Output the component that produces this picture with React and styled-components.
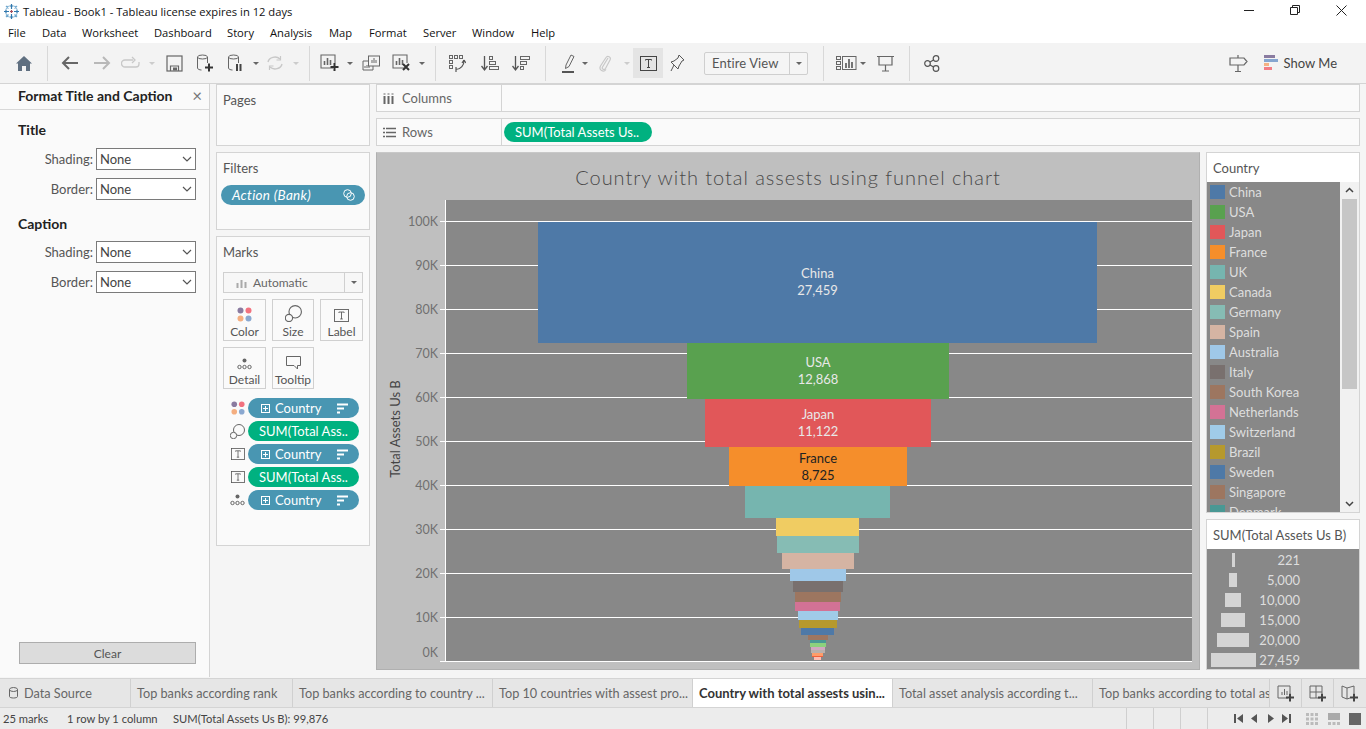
import React from "react";
import styled, { createGlobalStyle } from "styled-components";

const Global = createGlobalStyle`
  html, body { margin: 0; padding: 0; background: #fff; }
  * { box-sizing: border-box; }
  #root { width: 1366px; height: 729px; overflow: hidden; }
`;

const book = `Lato, "Open Sans", sans-serif`;
const segoe = `"Open Sans", "Noto Sans", sans-serif`;

const Shell = styled.div`
  width: 1366px; height: 729px; display: flex; flex-direction: column;
  font-family: ${book}; font-size: 12px; color: #555; overflow: hidden; background: #f5f5f5;
`;
const TitleBar = styled.div`
  height: 22px; flex: none; background: #fff; display: flex; align-items: center; padding-left: 3px;
  font-family: ${segoe}; font-size: 11.2px; color: #111; gap: 3px;
`;
const WindowButtons = styled.div`
  margin-left: auto; display: flex; align-items: center; height: 100%; margin-top: -2px; padding-right: 2px;
`;
const WindowButton = styled.div`
  width: 46px; height: 22px; display: flex; align-items: center; justify-content: center;
`;
const MenuBar = styled.div`
  height: 21px; flex: none; background: #fff; display: flex; align-items: center; padding-left: 8px;
  font-family: ${segoe}; font-size: 11.2px; color: #111;
`;
const MenuItem = styled.div`
  width: ${p => p.$w}px; white-space: nowrap;
`;
const Toolbar = styled.div`
  height: 41px; flex: none; background: #f3f3f3; border-bottom: 1px solid #d4d4d4;
  display: flex; align-items: center; padding-left: 8px;
`;
const Slot = styled.div`
  width: ${p => p.$w}px; height: 30px; flex: none; display: flex; align-items: center; justify-content: center;
  background: ${p => (p.$active ? "#e4e4e4" : "transparent")};
`;
const ToolSep = styled.div`
  width: 1px; height: 35px; background: #d8d8d8;
`;
const Caret = styled.div`
  width: 0; height: 0; border-left: 3px solid transparent; border-right: 3px solid transparent;
  border-top: 3px solid ${p => p.$c || "#666"};
`;
const FitBox = styled.div`
  width: 104px; height: 23px; flex: none; margin-left: 13px; margin-right: 5px; border: 1px solid #cfcfcf; border-radius: 2px;
  display: flex; align-items: center; font-size: 13px; letter-spacing: 0.1px; color: #555; background: #f5f5f5;
`;
const FitText = styled.div`
  flex: 1; padding-left: 7px;
`;
const FitArrow = styled.div`
  width: 18px; height: 100%; border-left: 1px solid #cfcfcf; display: flex; align-items: center; justify-content: center;
`;
const ToolRight = styled.div`
  margin-left: auto; display: flex; align-items: center; padding-right: 29px;
`;
const ShowMe = styled.div`
  display: flex; align-items: center; gap: 5px; font-size: 13px; color: #444; margin-left: 16px;
`;

const Body = styled.div`
  height: 593px; flex: none; display: flex;
`;
const FormatPanel = styled.div`
  width: 210px; flex: none; background: #fafafa; border-right: 1px solid #d4d4d4; display: flex; flex-direction: column;
`;
const FormatHead = styled.div`
  height: 26px; flex: none; border-bottom: 1px solid #d8d8d8; display: flex; align-items: center; justify-content: space-between;
  padding: 0 7px 2px 18px; font-weight: 700; font-size: 14px; color: #222;
`;
const CloseMark = styled.div`
  font-size: 17px; color: #777; font-weight: 400; line-height: 1;
`;
const SectionTitle = styled.div`
  font-weight: 700; font-size: 14px; color: #222; padding-left: 18px; height: 16px; line-height: 16px;
  margin-top: ${p => p.$top}px; margin-bottom: ${p => p.$bottom}px;
`;
const FormRow = styled.div`
  display: flex; align-items: center; height: 22px; margin-bottom: 8px;
`;
const FormLabel = styled.div`
  width: 93px; text-align: right; padding-right: 0; font-size: 13px; color: #555;
`;
const FakeSelect = styled.div`
  width: 100px; height: 22px; margin-left: 3px; border: 1px solid #7a7a7a; background: #fff; display: flex; align-items: center;
  justify-content: space-between; padding: 0 3px 0 3px; font-size: 13px; color: #444;
`;
const ClearButton = styled.div`
  margin: auto 13px 13px 19px; height: 22px; width: 177px; background: #dcdcdc; border: 1px solid #adadad;
  display: flex; align-items: center; justify-content: center; font-size: 12px; color: #555;
`;

const SideCol = styled.div`
  width: 154px; flex: none; margin-left: 6px; display: flex; flex-direction: column; gap: 6px;
`;
const Card = styled.div`
  background: #fafafa; border: 1px solid #d4d4d4; height: ${p => p.$h}px; flex: none;
`;
const CardTitle = styled.div`
  font-size: 13px; color: #555; height: 16px; line-height: 16px; margin: 7px 0 0 6px;
`;
const ActionPill = styled.div`
  margin: 9px 4px 0 4px; height: 20px; border-radius: 10px; background: #4996b2; color: #fff; font-style: italic;
  font-size: 13.5px; letter-spacing: 0.3px; display: flex; align-items: center; justify-content: space-between; padding: 0 10px 0 11px;
`;
const MarkSelect = styled.div`
  margin: 12px 6px 0 6px; height: 21px; border: 1px solid #d0d0d0; display: flex; align-items: center; background: #f7f7f7;
  font-size: 12px; color: #666;
`;
const MarkSelectText = styled.div`
  flex: 1; display: flex; align-items: center; gap: 6px; padding-left: 12px;
`;
const MarkSelectArrow = styled.div`
  width: 18px; height: 100%; border-left: 1px solid #d0d0d0; display: flex; align-items: center; justify-content: center;
`;
const MarkGrid = styled.div`
  display: grid; grid-template-columns: 43px 42px 43px; column-gap: 6px; row-gap: 6px; margin: 6px 6px 0 6px;
`;
const MarkButton = styled.div`
  height: 42px; border: 1px solid #d0d0d0; background: #fafafa; display: flex; flex-direction: column; align-items: center;
  justify-content: flex-end; padding-bottom: 1px; gap: 2px; font-size: 12px; color: #555;
`;
const PillList = styled.div`
  margin: 9px 0 0 0; display: flex; flex-direction: column; gap: 3px;
`;
const PillRow = styled.div`
  display: flex; align-items: center; height: 20px; padding-left: 10px;
`;
const PillIcon = styled.div`
  width: 21px; flex: none; display: flex; align-items: center; justify-content: center;
`;
const Pill = styled.div`
  width: 111px; height: 20px; border-radius: 10px; flex: none; margin-left: 0; color: #fff; font-size: 13px; white-space: nowrap;
  background: ${p => (p.$kind === "measure" ? "#00b180" : "#4996b2")};
  display: flex; align-items: center; padding-left: ${p => (p.$kind === "measure" ? 11 : 13)}px; gap: 5px;
`;
const PillEnd = styled.div`
  margin-left: auto; margin-right: 11px; display: flex;
`;

const Main = styled.div`
  width: 984px; flex: none; margin-left: 6px; display: flex; flex-direction: column;
`;
const Shelf = styled.div`
  height: 28px; flex: none; background: #fafafa; border: 1px solid #d4d4d4; display: flex; margin-bottom: ${p => p.$mb}px;
`;
const ShelfLabel = styled.div`
  width: 125px; flex: none; border-right: 1px solid #d4d4d4; display: flex; align-items: center; gap: 6px; padding-left: 6px;
  font-size: 13px; color: #666;
`;
const ShelfIcon = styled.div`
  width: 13px; flex: none; display: flex;
`;
const ShelfBody = styled.div`
  flex: 1; display: flex; align-items: center; padding-left: 2px;
`;
const ShelfPill = styled.div`
  width: 148px; height: 20px; border-radius: 10px; background: #00b180; color: #fff; font-size: 13px; padding-left: 11px;
  display: flex; align-items: center; white-space: nowrap;
`;
const VizRow = styled.div`
  display: flex; gap: 6px; margin-top: 6px; height: 518px;
`;
const ChartPanel = styled.div`
  width: 824px; flex: none; height: 518px; background: #bfbfbf; border: 1px solid #b0b0b0; border-top-color: #c8c8c8;
  display: flex; flex-direction: column;
`;
const ChartTitle = styled.div`
  height: 47px; flex: none; display: flex; align-items: center; justify-content: center; font-size: 20px; color: #4a4a4a;
  font-weight: 300; letter-spacing: 0.94px; padding-top: 1px; font-family: Lato, sans-serif;
`;
const ChartSvg = styled.svg`
  display: block; margin-left: -1px; font-family: ${book};
`;
const LegendCol = styled.div`
  width: 154px; flex: none; display: flex; flex-direction: column; gap: 6px;
`;
const LegendCard = styled.div`
  background: #fff; border: 1px solid #d4d4d4; height: ${p => p.$h}px; flex: none; display: flex; flex-direction: column; overflow: hidden;
`;
const LegendHead = styled.div`
  height: 29px; flex: none; display: flex; align-items: center; padding-left: 6px; font-size: 13px; color: #555;
`;
const LegendBody = styled.div`
  flex: 1; display: flex; min-height: 0; overflow: hidden;
`;
const LegendList = styled.div`
  width: 133px; flex: none; background: #888; padding-top: 0; overflow: hidden; display: flex; flex-direction: column;
`;
const LegendRow = styled.div`
  height: 20px; flex: none; display: flex; align-items: center; padding-left: 3px; color: #dedede; font-size: 13px; gap: 4px;
`;
const Swatch = styled.div`
  width: 15px; height: 14px; flex: none; background: ${p => p.$c};
`;
const Scrollbar = styled.div`
  flex: 1; background: #f1f1f1; display: flex; flex-direction: column; align-items: center; justify-content: space-between; padding: 0 2px;
`;
const ScrollThumb = styled.div`
  width: 15px; height: 195px; background: #c6c6c6; margin-bottom: 106px;
`;
const ScrollArrow = styled.div`
  height: 17px; display: flex; align-items: center; justify-content: center; width: 100%;
`;
const SizeList = styled.div`
  flex: 1; background: #888; display: flex; flex-direction: column; padding-top: 1px;
`;
const SizeRow = styled.div`
  height: 20px; flex: none; display: flex; align-items: center; color: #dedede; font-size: 13px;
`;
const SizeCell = styled.div`
  width: 52px; flex: none; display: flex; justify-content: center; padding-left: 0;
`;
const SizeBar = styled.div`
  height: 14px; background: #d4d4d4;
`;
const SizeValue = styled.div`
  width: 41px; text-align: right;
`;

const Tabs = styled.div`
  height: 30px; flex: none; background: #e6e6e6; border-top: 1px solid #d4d4d4; display: flex; margin-top: 1px;
  border-bottom: 1px solid #d4d4d4;
`;
const Tab = styled.div`
  width: ${p => p.$w}px; flex: none; border-right: 1px solid #d0d0d0; display: flex; align-items: center; gap: 6px; padding-left: ${p => p.$pl}px;
  white-space: nowrap; overflow: hidden; font-size: ${p => (p.$active ? 13 : 12.7)}px; color: ${p => (p.$active ? "#333" : "#666")};
  font-weight: ${p => (p.$active ? 700 : 400)}; background: ${p => (p.$active ? "#fff" : "transparent")};
`;
const TabAdd = styled.div`
  width: 32px; flex: none; border-right: 1px solid #d0d0d0; display: flex; align-items: center; justify-content: center;
  &:last-child { border-right: none; }
`;
const StatusBar = styled.div`
  height: 22px; flex: none; background: #ececec; border-bottom: 1px solid #a8a8a8; display: flex; align-items: center; font-size: 11.2px; color: #444;
`;
const StatusText = styled.div`
  width: ${p => p.$w}px; flex: none; padding-left: ${p => p.$pl || 0}px; white-space: nowrap;
`;
const StatusCell = styled.div`
  width: 27px; height: 100%; flex: none; border-left: 1px solid #cfcfcf;
`;
const StatusNav = styled.div`
  flex: 1; height: 100%; border-left: 1px solid #cfcfcf; display: flex; align-items: center; padding-left: 22px;
`;
const NavButton = styled.div`
  width: 16px; flex: none; display: flex; justify-content: center; align-items: center;
`;
const ViewButton = styled.div`
  width: 12px; flex: none; margin-left: ${p => p.$ml}px; display: flex;
`;

/* icons */
const I = ({ w = 18, h = 18, vb, children }) => (
  <svg width={w} height={h} viewBox={vb || `0 0 ${w} ${h}`} fill="none">{children}</svg>
);
const Logo = () => (
  <I w={17} h={17}>
    <g stroke="#2f77ad" strokeWidth="1.2">
      <path d="M8.500 1v5M6.500 3h4M8.500 11v5M6.500 14h4M1 8.500h5M3 6.500v4M11 8.500h5M14 6.500v4" />
      <path d="M3 3l2.500 2.500M5.500 3 3 5.500M11.500 3 14 5.500M14 3l-2.500 2.500M3 11.500 5.500 14M5.500 11.500 3 14M11.500 11.500 14 14M14 11.500 11.500 14" stroke="#6fa8cf" />
      <path d="M7 8.500h3M8.500 7v3" stroke="#a94f5c" />
    </g>
  </I>
);
const Home = () => <I w={18} h={18}><path d="M1 9.500 9 2l8 7.500h-2V17h-4v-5H7v5H3V9.500z" fill="#5f6f80" /></I>;
const Arrow = ({ c, flip }) => (
  <I w={18} h={16}>
    <path d={flip ? "M1 8h15M10 2l6 6-6 6" : "M17 8H2M8 2 2 8l6 6"} stroke={c} strokeWidth="2" />
  </I>
);
const Redo = () => (
  <I w={20} h={14}>
    <path d="M12 4H4a3 3 0 0 0 0 7h11a3 3 0 0 0 3-3V6" stroke="#c8c8c8" strokeWidth="1.3" />
    <path d="M11 1l3 3-3 3" stroke="#c8c8c8" strokeWidth="1.3" />
  </I>
);
const Save = () => (
  <I w={17} h={17}>
    <rect x="1" y="1" width="15" height="15" stroke="#666" strokeWidth="1.2" />
    <path d="M4.500 16v-5h8v5" stroke="#666" strokeWidth="1.2" />
    <rect x="7" y="12.500" width="4" height="3" fill="#666" />
  </I>
);
const Cyl = ({ mark }) => (
  <I w={18} h={18}>
    <ellipse cx="6.500" cy="3" rx="5" ry="2" stroke="#666" />
    <path d="M1.500 3v11c0 1.200 2 2 4 2M11.500 3v6" stroke="#666" />
    {mark === "plus" && <path d="M13 9.500v8M9 13.500h8" stroke="#333" strokeWidth="2" />}
    {mark === "pause" && <path d="M10 10v7M13.500 10v7" stroke="#444" strokeWidth="2" />}
  </I>
);
const Refresh = () => (
  <I w={18} h={16}>
    <path d="M2 7a7 6 0 0 1 12-3M16 9a7 6 0 0 1-12 3" stroke="#c8c8c8" strokeWidth="1.4" />
    <path d="M14.500 1v4h-4M3.500 15v-4h4" stroke="#c8c8c8" strokeWidth="1.2" />
  </I>
);
const Sheet = ({ mark }) => (
  <I w={20} h={18}>
    <path d="M13 14H1V1h14v8" stroke="#666" strokeWidth="1.1" />
    <path d="M4.500 11V7M7.500 11V4M10.500 11V6" stroke="#666" strokeWidth="1.6" />
    {mark === "plus" && <path d="M14.500 9v8M10.500 13h8" stroke="#333" strokeWidth="2" />}
    {mark === "x" && <path d="M11 10l6 6M17 10l-6 6" stroke="#333" strokeWidth="2" />}
  </I>
);
const Dup = () => (
  <I w={18} h={17}>
    <rect x="6.500" y="1" width="11" height="10" fill="#f3f3f3" stroke="#666" />
    <path d="M10 8V5M12 8V3M14 8V5" stroke="#666" />
    <path d="M6 6H1v9h10v-4" stroke="#666" />
    <path d="M3 13v-2M5 13v-3M7 13v-2" stroke="#666" />
  </I>
);
const Swap = () => (
  <I w={18} h={18}>
    <g stroke="#666">
      <rect x="1.500" y="1.500" width="3" height="3" /><rect x="6.500" y="1.500" width="3" height="3" /><rect x="11.500" y="1.500" width="3" height="3" />
      <rect x="1.500" y="6.500" width="3" height="3" /><rect x="1.500" y="11.500" width="3" height="3" />
    </g>
    <path d="M16 7c0 4-3 8-8 8.500M8 13v5M16 6l-2 3M16 6l2 3" stroke="#555" strokeWidth="1.2" />
  </I>
);
const Sort = ({ desc }) => (
  <I w={18} h={17}>
    <path d="M3.500 1v14M0.500 11l3 4 3-4" stroke="#555" strokeWidth="1.3" />
    {desc ? (
      <g stroke="#666"><rect x="8.500" y="1.500" width="9" height="3" /><rect x="8.500" y="6.500" width="6" height="3" /><rect x="8.500" y="11.500" width="3" height="3" /></g>
    ) : (
      <g stroke="#666"><rect x="8.500" y="1.500" width="3" height="3" /><rect x="8.500" y="6.500" width="6" height="3" /><rect x="8.500" y="11.500" width="9" height="3" /></g>
    )}
  </I>
);
const Highlight = () => (
  <I w={14} h={20}>
    <path d="M5 12 10 2l3 1.500-5 10-3.500 2z" stroke="#666" />
    <rect x="1" y="18" width="12" height="2" fill="#555" />
  </I>
);
const Clip = () => (
  <I w={14} h={18}>
    <path d="M10 4 4.500 13c-1 2 1.500 3.500 3 1.500L12 6c1.500-3-2.500-5-4-2.500L2.500 12c-2 4 3 7 5.500 3.500" stroke="#c8c8c8" strokeWidth="1.2" />
  </I>
);
const TBox = ({ s = 17, c = "#444" }) => (
  <I w={s} h={s - 2} vb="0 0 17 15">
    <rect x="0.500" y="0.500" width="16" height="14" stroke={c} />
    <path d="M5.500 4.500v-1h6v1M8.500 3.500v8M7 11.500h3" stroke={c} />
  </I>
);
const Pin = () => (
  <I w={15} h={18}>
    <path d="M9 1l5 5-2 1-3 5-1 3-7-7 3-1 4-3z M4 11l-3 6" stroke="#555" />
  </I>
);
const BarsShow = () => (
  <I w={21} h={14}>
    <g stroke="#666"><rect x="0.500" y="0.500" width="4" height="3" /><rect x="0.500" y="5.500" width="4" height="3" /><rect x="0.500" y="10.500" width="4" height="3" /></g>
    <rect x="6.500" y="0.500" width="13.500" height="13" stroke="#666" />
    <path d="M10 12V7M13 12V3M16 12V6" stroke="#555" strokeWidth="1.6" />
  </I>
);
const Present = () => (
  <I w={17} h={17}>
    <path d="M0 1.500h17M2 1.500V10h13V1.500M8.500 10v6M5 16h7" stroke="#666" strokeWidth="1.2" />
  </I>
);
const Share = () => (
  <I w={16} h={17}>
    <g stroke="#555" strokeWidth="1.2"><circle cx="3.500" cy="8.500" r="2.800" /><circle cx="12" cy="3.500" r="2.800" /><circle cx="12" cy="13.500" r="2.800" /><path d="M6 7l3.500-2M6 10l3.500 2" /></g>
  </I>
);
const Sign = () => (
  <I w={19} h={19}>
    <path d="M9 1v3M9 11v6M6 17.500h6" stroke="#666" strokeWidth="1.2" />
    <path d="M1 4h14l3 3.500-3 3.500H1z" stroke="#666" strokeWidth="1.2" />
  </I>
);
const ShowBars = () => (
  <I w={15} h={16}>
    <rect y="0" width="11" height="3" fill="#8a7ba0" /><rect y="4" width="14" height="3" fill="#86a6d0" />
    <rect y="8" width="5" height="3" fill="#f4b183" /><rect y="12" width="8" height="3" fill="#f27d85" />
  </I>
);
const Dots = ({ big }) => (
  <I w={big ? 15 : 14} h={big ? 15 : 14} vb="0 0 15 15">
    <circle cx="3.500" cy="3.500" r="3" fill="#8a7ba0" /><circle cx="11.500" cy="3.500" r="3" fill="#f2727f" />
    <circle cx="3.500" cy="11.500" r="3" fill="#f4ae80" /><circle cx="11.500" cy="11.500" r="3" fill="#8aa8d0" />
  </I>
);
const SizeIcon = ({ s = 15 }) => (
  <I w={s} h={s} vb="0 0 15 15">
    <circle cx="9" cy="6" r="5.500" stroke="#666" />
    <circle cx="3.500" cy="11.500" r="3.200" stroke="#666" fill="#fafafa" />
  </I>
);
const DetailIcon = () => (
  <I w={15} h={12}>
    <circle cx="7.500" cy="2.500" r="2" fill="#666" />
    <g stroke="#666"><circle cx="2.500" cy="9" r="1.700" /><circle cx="7.500" cy="9" r="1.700" /><circle cx="12.500" cy="9" r="1.700" /></g>
  </I>
);
const TooltipIcon = () => (
  <I w={15} h={14}>
    <path d="M.5.500h14v9h-3v3.500l-3.500-3.500H.5z" stroke="#666" />
  </I>
);
const PlusBox = () => (
  <I w={9} h={9}><rect x=".5" y=".5" width="8" height="8" stroke="#fff" /><path d="M4.500 2v5M2 4.500h5" stroke="#fff" /></I>
);
const SortLines = () => (
  <I w={11} h={11}><path d="M0 1.500h11M0 5.500h7M0 9.500h3" stroke="#fff" strokeWidth="2" /></I>
);
const Linked = () => (
  <I w={12} h={12}><g stroke="#fff"><circle cx="4.500" cy="4.500" r="3.800" /><circle cx="7.500" cy="7.500" r="3.800" /></g></I>
);
const Chevron = () => (
  <I w={10} h={6}><path d="M1 1l4 4 4-4" stroke="#555" strokeWidth="1.200" /></I>
);
const ColumnsIcon = () => (
  <I w={11} h={11}><path d="M1.500 3v8M5.500 3v8M9.500 3v8" stroke="#666" strokeWidth="2" /><path d="M0.500 1h2M4.500 1h2M8.500 1h2" stroke="#666" /></I>
);
const RowsIcon = () => (
  <I w={13} h={11}><path d="M3 1.500h10M3 5.500h10M3 9.500h10" stroke="#666" strokeWidth="1.600" /><path d="M0 1.500h2M0 5.500h2M0 9.500h2" stroke="#666" strokeWidth="1.600" /></I>
);
const AddSheet = ({ kind }) => (
  <I w={18} h={17}>
    {kind === "sheet" && <><path d="M11 13H1V1h12v7" stroke="#666" /><path d="M5 10V7M7.500 10V4M10 10V6" stroke="#666" /></>}
    {kind === "dash" && <path d="M11 13H1V1h12v7M7 1v12M1 7h12" stroke="#666" />}
    {kind === "story" && <path d="M6 3 1 1v11l5 2 3-1M6 3l7-2v7M6 3v11" stroke="#666" />}
    <path d="M13 8.500v8M9 12.500h8" stroke="#444" strokeWidth="2" />
  </I>
);
const Nav = ({ d, bar }) => (
  <I w={9} h={9}>
    <path d={d} fill="#555" />
    {bar !== undefined && <rect x={bar} y="0" width="2" height="9" fill="#555" />}
  </I>
);

const tools = [
  [32, <Home />], [14, <ToolSep />], [32, <Arrow c="#666" />], [32, <Arrow c="#b8b8b8" flip />], [26, <Redo />], [16, <Caret $c="#ccc" />],
  [28, <Save />], [34, <Cyl mark="plus" />], [28, <Cyl mark="pause" />], [12, <Caret />], [26, <Refresh />], [16, <Caret $c="#ccc" />],
  [10, <ToolSep />], [32, <Sheet mark="plus" />], [8, <Caret />], [34, <Dup />], [28, <Sheet mark="x" />], [12, <Caret />],
  [14, <ToolSep />], [30, <Swap />], [36, <Sort />], [26, <Sort desc />], [22, <ToolSep />], [24, <Highlight />], [10, <Caret />],
  [30, <Clip />], [13, <Caret $c="#ccc" />], [30, <TBox />, true], [28, <Pin />],
];
const tools2 = [
  [20, <ToolSep />], [26, <BarsShow />], [8, <Caret />], [36, <Present />], [12, <ToolSep />], [34, <Share />],
];

const menu = [["File", 34], ["Data", 40], ["Worksheet", 72], ["Dashboard", 73], ["Story", 43], ["Analysis", 59], ["Map", 40], ["Format", 54], ["Server", 49], ["Window", 59], ["Help", 40]];

const country = [
  ["China", "#4e79a7", 538, 1097, 222, 343, "27,459", -1],
  ["USA", "#59a14f", 687, 949, 343, 399, "12,868", 0],
  ["Japan", "#e15759", 705, 931, 399, 447, "11,122", 0],
  ["France", "#f58e2b", 729, 907, 447, 486, "8,725", 0],
  ["UK", "#76b5af", 745, 890, 486, 518],
  ["Canada", "#f0cc62", 776, 859, 518, 536],
  ["Germany", "#86bcb4", 777, 859, 536, 553],
  ["Spain", "#d5b4a3", 782, 854, 553, 569],
  ["Australia", "#9fc8e8", 790, 846, 569, 581],
  ["Italy", "#79706e", 793, 843, 581, 592],
  ["South Korea", "#9d7660", 795, 841, 592, 602],
  ["Netherlands", "#d37295", 795, 840, 602, 611],
  ["Switzerland", "#a0cbe8", 798, 838, 611, 620],
  ["Brazil", "#b6992d", 799, 837, 620, 628],
  ["Sweden", "#4e79a7", 801, 834, 628, 635],
  ["Singapore", "#9d7660", 808, 828, 635, 640],
  ["Denmark", "#499894", 810, 826, 640, 643],
];
const tinyBars = [
  ["#8cd17d", 810, 826, 643, 647],
  ["#d0a8c0", 811, 825, 647, 650],
  ["#bab0ac", 811, 825, 650, 653],
  ["#ff9d6a", 812, 823, 653, 656],
  ["#f1603c", 812, 823, 656, 657],
  ["#ffbcb0", 814, 821, 657, 660],
];
const ticks = [[100, 221], [90, 265], [80, 309], [70, 353], [60, 397], [50, 441], [40, 485], [30, 529], [20, 573], [10, 617]];
const sizes = [[3, "221"], [8, "5,000"], [16, "10,000"], [24, "15,000"], [32, "20,000"], [45, "27,459"]];
const marks = [
  ["Color", <Dots big />], ["Size", <SizeIcon s={17} />], ["Label", <TBox s={15} c="#555" />], ["Detail", <DetailIcon />], ["Tooltip", <TooltipIcon />],
];
const pills = [
  [<Dots />, "Country", "dim"], [<SizeIcon />, "SUM(Total Ass..", "measure"], [<TBox s={14} c="#555" />, "Country", "dim"],
  [<TBox s={14} c="#555" />, "SUM(Total Ass..", "measure"], [<DetailIcon />, "Country", "dim"],
];
const tabs = [
  ["Data Source", 131, false, 9], ["Top banks according rank", 162, false, 6], ["Top banks according to country ...", 200, false, 6],
  ["Top 10 countries with assest pro...", 200, false, 6], ["Country with total assests usin...", 200, true, 6], ["Total asset analysis according t...", 200, false, 6], ["Top banks according to total assets", 177, false, 6],
];

function Chart() {
  return (
    <ChartSvg width={824} height={469} viewBox="376 200 824 469">
      <rect x="446" y="200" width="746" height="461" fill="#888" />
      {ticks.map(([v, y]) => (
        <g key={v}>
          <rect x="440" y={y} width="752" height="1" fill="#fff" />
          <text x="438" y={y + 5} textAnchor="end" fontSize="12.500" fill="#707070">{v}K</text>
        </g>
      ))}
      <rect x="445" y="200" width="1" height="461" fill="#fff" />
      <rect x="440" y="661" width="752" height="1" fill="#fff" />
      <text x="438" y="657" textAnchor="end" fontSize="12.500" fill="#707070">0K</text>
      <text transform="translate(400 429) rotate(-90)" textAnchor="middle" fontSize="13" fill="#444">Total Assets Us B</text>
      {country.map(([n, c, x1, x2, y1, y2]) => (
        <rect key={n} x={x1} y={y1} width={x2 - x1} height={y2 - y1} fill={c} />
      ))}
      {tinyBars.map(([c, x1, x2, y1, y2]) => (
        <rect key={y1} x={x1} y={y1} width={x2 - x1} height={y2 - y1} fill={c} />
      ))}
      {country.filter(r => r[6]).map(([n, , x1, x2, y1, y2, v, dy]) => {
        const cy = (y1 + y2) / 2 + dy;
        const color = n === "France" ? "#222" : "#e8e8e8";
        return (
          <g key={n} textAnchor="middle" fontSize="13" fill={color}>
            <text x={(x1 + x2) / 2} y={cy - 4}>{n}</text>
            <text x={(x1 + x2) / 2} y={cy + 13}>{v}</text>
          </g>
        );
      })}
    </ChartSvg>
  );
}

export default function App() {
  return (
    <Shell>
      <Global />
      <TitleBar>
        <Logo />
        Tableau - Book1 - Tableau license expires in 12 days
        <WindowButtons>
          <WindowButton><I w={10} h={10}><path d="M0 5.500h10" stroke="#222" /></I></WindowButton>
          <WindowButton><I w={10} h={10}><path d="M2.500 2.500V.5h7v7h-2M.5 2.500h7v7h-7z" stroke="#222" /></I></WindowButton>
          <WindowButton><I w={11} h={11}><path d="M.5.5l10 10M10.500.5l-10 10" stroke="#222" /></I></WindowButton>
        </WindowButtons>
      </TitleBar>
      <MenuBar>
        {menu.map(([m, w]) => <MenuItem key={m} $w={w}>{m}</MenuItem>)}
      </MenuBar>
      <Toolbar>
        {tools.map(([w, icon, active], i) => <Slot key={i} $w={w} $active={active}>{icon}</Slot>)}
        <FitBox>
          <FitText>Entire View</FitText>
          <FitArrow><Caret /></FitArrow>
        </FitBox>
        {tools2.map(([w, icon], i) => <Slot key={i} $w={w}>{icon}</Slot>)}
        <ToolRight>
          <Sign />
          <ShowMe><ShowBars />Show Me</ShowMe>
        </ToolRight>
      </Toolbar>
      <Body>
        <FormatPanel>
          <FormatHead>Format Title and Caption<CloseMark>×</CloseMark></FormatHead>
          <SectionTitle $top={12} $bottom={10}>Title</SectionTitle>
          <FormRow><FormLabel>Shading:</FormLabel><FakeSelect>None<Chevron /></FakeSelect></FormRow>
          <FormRow><FormLabel>Border:</FormLabel><FakeSelect>None<Chevron /></FakeSelect></FormRow>
          <SectionTitle $top={8} $bottom={9}>Caption</SectionTitle>
          <FormRow><FormLabel>Shading:</FormLabel><FakeSelect>None<Chevron /></FakeSelect></FormRow>
          <FormRow><FormLabel>Border:</FormLabel><FakeSelect>None<Chevron /></FakeSelect></FormRow>
          <ClearButton>Clear</ClearButton>
        </FormatPanel>
        <SideCol>
          <Card $h={62}><CardTitle>Pages</CardTitle></Card>
          <Card $h={78}>
            <CardTitle>Filters</CardTitle>
            <ActionPill>Action (Bank)<Linked /></ActionPill>
          </Card>
          <Card $h={310}>
            <CardTitle>Marks</CardTitle>
            <MarkSelect>
              <MarkSelectText>
                <I w={11} h={10}><path d="M1.500 10V5M5.500 10V2M9.500 10V4" stroke="#aaa" strokeWidth="2" /></I>
                Automatic
              </MarkSelectText>
              <MarkSelectArrow><Caret /></MarkSelectArrow>
            </MarkSelect>
            <MarkGrid>
              {marks.map(([n, icon]) => <MarkButton key={n}>{icon}{n}</MarkButton>)}
            </MarkGrid>
            <PillList>
              {pills.map(([icon, label, kind], i) => (
                <PillRow key={i}>
                  <PillIcon>{icon}</PillIcon>
                  <Pill $kind={kind}>
                    {kind === "dim" && <PlusBox />}
                    {label}
                    {kind === "dim" && <PillEnd><SortLines /></PillEnd>}
                  </Pill>
                </PillRow>
              ))}
            </PillList>
          </Card>
        </SideCol>
        <Main>
          <Shelf $mb={6}>
            <ShelfLabel><ShelfIcon><ColumnsIcon /></ShelfIcon>Columns</ShelfLabel>
            <ShelfBody />
          </Shelf>
          <Shelf $mb={0}>
            <ShelfLabel><ShelfIcon><RowsIcon /></ShelfIcon>Rows</ShelfLabel>
            <ShelfBody><ShelfPill>SUM(Total Assets Us..</ShelfPill></ShelfBody>
          </Shelf>
          <VizRow>
            <ChartPanel>
              <ChartTitle>Country with total assests using funnel chart</ChartTitle>
              <Chart />
            </ChartPanel>
            <LegendCol>
              <LegendCard $h={361}>
                <LegendHead>Country</LegendHead>
                <LegendBody>
                  <LegendList>
                    {country.map(([n, c]) => <LegendRow key={n}><Swatch $c={c} />{n}</LegendRow>)}
                  </LegendList>
                  <Scrollbar>
                    <ScrollArrow><I w={9} h={6}><path d="M1 5l3.500-3.500L8 5" stroke="#444" strokeWidth="1.500" /></I></ScrollArrow>
                    <ScrollThumb />
                    <ScrollArrow><I w={9} h={6}><path d="M1 1l3.500 3.500L8 1" stroke="#444" strokeWidth="1.500" /></I></ScrollArrow>
                  </Scrollbar>
                </LegendBody>
              </LegendCard>
              <LegendCard $h={151}>
                <LegendHead>SUM(Total Assets Us B)</LegendHead>
                <SizeList>
                  {sizes.map(([w, v]) => (
                    <SizeRow key={v}>
                      <SizeCell><SizeBar style={{ width: w }} /></SizeCell>
                      <SizeValue>{v}</SizeValue>
                    </SizeRow>
                  ))}
                </SizeList>
              </LegendCard>
            </LegendCol>
          </VizRow>
        </Main>
      </Body>
      <Tabs>
        {tabs.map(([t, w, active, pl], i) => (
          <Tab key={t} $w={w} $active={active} $pl={pl}>
            {i === 0 && <I w={9} h={12}><ellipse cx="4.500" cy="2.500" rx="4" ry="2" stroke="#666" /><path d="M.5 2.500v7c0 2 8 2 8 0v-7" stroke="#666" /></I>}
            {t}
          </Tab>
        ))}
        <TabAdd><AddSheet kind="sheet" /></TabAdd>
        <TabAdd><AddSheet kind="dash" /></TabAdd>
        <TabAdd><AddSheet kind="story" /></TabAdd>
      </Tabs>
      <StatusBar>
        <StatusText $w={67} $pl={3}>25 marks</StatusText>
        <StatusText $w={106}>1 row by 1 column</StatusText>
        <StatusText $w={953}>SUM(Total Assets Us B): 99,876</StatusText>
        <StatusCell /><StatusCell /><StatusCell />
        <StatusNav>
          <NavButton><Nav d="M9 0v9L3 4.500z" bar={0} /></NavButton>
          <NavButton><Nav d="M7 0v9L1 4.500z" /></NavButton>
          <NavButton><Nav d="M2 0v9l6-4.500z" /></NavButton>
          <NavButton><Nav d="M0 0v9l6-4.500z" bar={7} /></NavButton>
          <ViewButton $ml={12}>
            <I w={12} h={12}>
              <g fill="#bbb"><rect width="3" height="3" /><rect x="4.500" width="3" height="3" /><rect x="9" width="3" height="3" /><rect y="4.500" width="3" height="3" /><rect x="4.500" y="4.500" width="3" height="3" /><rect x="9" y="4.500" width="3" height="3" /><rect y="9" width="3" height="3" /><rect x="4.500" y="9" width="3" height="3" /><rect x="9" y="9" width="3" height="3" /></g>
            </I>
          </ViewButton>
          <ViewButton $ml={10}>
            <I w={12} h={12}><rect width="12" height="7" fill="#aaa" /><rect y="9" width="3" height="3" fill="#bbb" /><rect x="4.500" y="9" width="3" height="3" fill="#bbb" /><rect x="9" y="9" width="3" height="3" fill="#bbb" /></I>
          </ViewButton>
          <ViewButton $ml={9}>
            <I w={12} h={12}><rect width="12" height="12" fill="#666" /></I>
          </ViewButton>
        </StatusNav>
      </StatusBar>
    </Shell>
  );
}
